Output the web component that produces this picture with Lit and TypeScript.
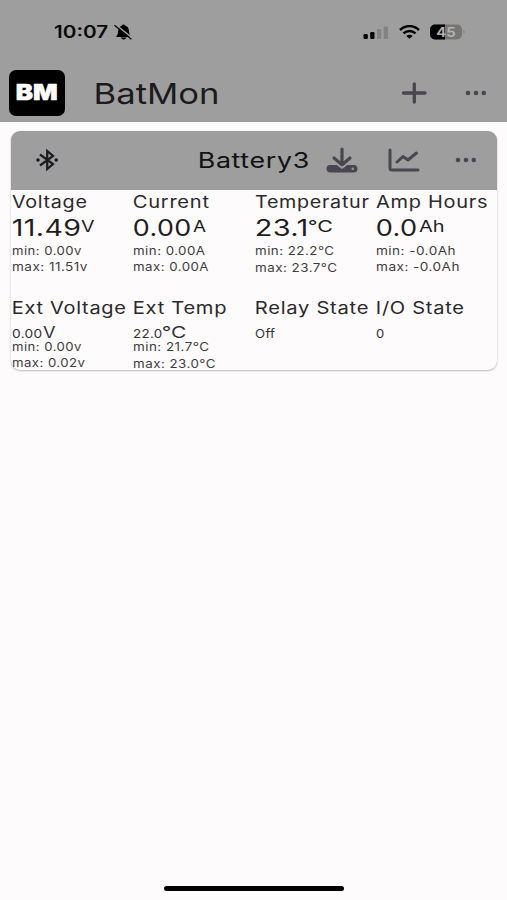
import { LitElement, html, css } from "lit";
import { customElement, property, state } from "lit/decorators.js";
import { styleMap } from "lit/directives/style-map.js";

const pen = document.createElement("canvas").getContext("2d") as any;

/** One run of wide-set text whose visible ink fills exactly `span` pixels. */
@customElement("wide-text")
export class WideText extends LitElement {
  @property() text = "";
  @property({ type: Number }) span = 50;
  @property({ type: Number }) size = 16;
  @property({ type: Number }) spacing = 0;
  @property() weight = "400";

  static styles = css`
    :host { display: inline-block; flex: none; height: 100%; }
    .run { display: inline-block; white-space: pre; transform-origin: 0 50%; }
  `;

  render() {
    pen.font = `${this.weight} ${this.size}px Inter`;
    pen.letterSpacing = `${this.spacing}px`;
    pen.textAlign = "left";
    const m = pen.measureText(this.text);
    const left = m.actualBoundingBoxLeft;
    const k = this.span / (m.actualBoundingBoxRight + left);
    this.style.width = `${this.span}px`;
    return html`<span class="run" style=${styleMap({
      fontSize: `${this.size}px`,
      fontWeight: this.weight,
      letterSpacing: `${this.spacing}px`,
      transform: `translateX(${left * k}px) scaleX(${k})`,
    })}>${this.text}</span>`;
  }
}

type Run = [text: string, span: number];
interface Reading {
  title: Run; value: Run; unit?: Run; gap?: number; small?: boolean;
  min?: Run; max?: Run; inset: number; low?: boolean;
}

@customElement("reading-cell")
export class ReadingCell extends LitElement {
  @property({ attribute: false }) data!: Reading;

  static styles = css`
    :host { display: block; min-width: 0; color: #2b292c; }
    .row { display: flex; padding-left: 0.6px; }
    .title { height: 22px; line-height: 22px; }
    .value { height: 27.5px; line-height: 29px; color: #1f1d20; padding-left: 1.5px; }
    .value .unit { line-height: 26px; }
    .value.small { height: 18px; line-height: 26px; color: #343236; padding-left: 0.5px; }
    .limit { height: 16px; line-height: 16px; color: #3f3d42; }
    .low { padding-top: 1px; }
  `;

  render() {
    const d = this.data;
    const valueSize = d.small ? 12.2 : 22.2;
    return html`
      <div class="row title" style=${styleMap({ paddingLeft: `${d.inset}px` })}>
        <wide-text .text=${d.title[0]} .span=${d.title[1]} .size=${17} .spacing=${0.6}></wide-text>
      </div>
      <div class="row value ${d.small ? "small" : ""}">
        <wide-text .text=${d.value[0]} .span=${d.value[1]} .size=${valueSize} .spacing=${0.3}></wide-text>
        ${d.unit ? html`<wide-text class="unit" style=${styleMap({ marginLeft: `${d.gap ?? 2}px` })}
          .text=${d.unit[0]} .span=${d.unit[1]} .size=${16}></wide-text>` : ""}
      </div>
      ${d.min ? html`<div class="row limit">
        <wide-text .text=${d.min[0]} .span=${d.min[1]} .size=${11.6} .spacing=${0.4}></wide-text>
      </div>` : ""}
      ${d.max ? html`<div class="row limit ${d.low ? "low" : ""}">
        <wide-text .text=${d.max[0]} .span=${d.max[1]} .size=${11.6} .spacing=${0.4}></wide-text>
      </div>` : ""}
    `;
  }
}

@customElement("app-root")
export class AppRoot extends LitElement {
  @state() private live: Reading[] = [
    { title: ["Voltage", 75], value: ["11.49", 67], unit: ["V", 13.5], gap: 1.5, min: ["min: 0.00v", 70], max: ["max: 11.51v", 76], inset: 0.7 },
    { title: ["Current", 75.5], value: ["0.00", 56], unit: ["A", 13], gap: 2.5, min: ["min: 0.00A", 72], max: ["max: 0.00A", 75.5], inset: 1 },
    { title: ["Temperatur", 114.5], value: ["23.1", 51], unit: ["°C", 23], gap: 2, min: ["min: 22.2°C", 78.5], max: ["max: 23.7°C", 81.5], inset: 1.3, low: true },
    { title: ["Amp Hours", 111.5], value: ["0.0", 39], unit: ["Ah", 25], gap: 2.5, min: ["min: -0.0Ah", 78.5], max: ["max: -0.0Ah", 82.5], inset: 0.5 },
  ];
  @state() private ext: Reading[] = [
    { title: ["Ext Voltage", 113], value: ["0.00", 29.5], unit: ["V", 12.5], gap: 1.5, small: true, min: ["min: 0.00v", 70], max: ["max: 0.02v", 73.5], inset: 1.5 },
    { title: ["Ext Temp", 92], value: ["22.0", 28.5], unit: ["°C", 22.5], gap: 1.7, small: true, min: ["min: 21.7°C", 75.5], max: ["max: 23.0°C", 82], inset: 1.1, low: true },
    { title: ["Relay State", 112.5], value: ["Off", 20.5], small: true, inset: 1.5 },
    { title: ["I/O State", 87], value: ["0", 7.5], small: true, inset: 1.5 },
  ];

  static styles = css`
    :host { display: flex; flex-direction: column; height: 900px; background: #fefbfd;
      font-family: Inter, sans-serif; color: #1c1a1d; overflow: hidden; }
    svg { display: block; flex: none; }
    .top { height: 122px; flex: none; background: #9e9e9e; box-sizing: border-box; }
    .status { height: 63px; display: flex; align-items: center; padding: 1px 41px 0 54px; box-sizing: border-box; }
    .status wide-text { height: 20px; line-height: 21px; color: #0a0a0a; }
    .bell { margin-left: 5px; }
    .grow { flex: 1; }
    .wifi { margin: 0 10px; }
    .bar { height: 59px; display: flex; align-items: center; padding: 0 20px 0 9px; box-sizing: border-box; }
    .logo { width: 56px; height: 46px; border-radius: 7px; background: #000; color: #fff;
      display: flex; justify-content: center; line-height: 44px; -webkit-text-stroke: 0.5px #fff; }
    .name { height: 36px; line-height: 36px; margin: 2px 0 0 30.5px; }
    .more { margin-left: 38px; }
    .card { margin: 9px 10px 0 11px; height: 238.5px; border-radius: 9px; overflow: hidden;
      box-shadow: 0 1px 2px rgba(0,0,0,.25), 0 0 1px rgba(0,0,0,.12); background: #fefbfd; flex: none; }
    .head { height: 58.5px; background: #9e9e9e; display: flex; align-items: center; padding: 0 20px 0 25px; }
    .head wide-text { height: 30px; line-height: 32px; color: #121212; }
    .save { margin-left: 18px; }
    .chart { margin-left: 30px; }
    .menu { margin-left: 35px; }
    .grid { display: grid; grid-template-columns: repeat(4, 121.5px); }
    .first { padding-top: 1.5px; height: 107.5px; box-sizing: border-box; }
    .home { width: 180px; height: 5px; border-radius: 3px; background: #000; margin: auto auto 9px 164px; }
  `;

  render() {
    return html`
      <div class="top">
        <div class="status">
          <wide-text text="10:07" .span=${54.5} .size=${17} weight="600"></wide-text>
          <svg class="bell" width="19" height="16" viewBox="0 0 19 16">
            <path d="M1.800 13C4.300 11 3.700 8.500 4.500 5.300C5.300 2.700 7 2 8 1.600C8.300 0 10.700 0 11 1.600C13.500 2.300 14.600 4 14.900 6.500C15.200 9.500 15.500 10.800 17 13ZM7 13.600H12.300C11.800 16.200 7.500 16.200 7 13.600Z"/>
            <path d="M2.200 1.200L18.500 14.200" stroke="#9e9e9e" stroke-width="1.500"/>
            <path d="M0.800 1.600L17 14.900" stroke="#0a0a0a" stroke-width="1.300" stroke-linecap="round"/>
          </svg>
          <span class="grow"></span>
          <svg width="26" height="15" viewBox="0 0 26 15">
            <rect x="0.500" y="9" width="4.300" height="5" rx="1.300"/>
            <rect x="7.200" y="7" width="4.300" height="7" rx="1.300"/>
            <rect x="14" y="4" width="4.300" height="10" rx="1.300" fill="#838383"/>
            <rect x="20.700" y="1.500" width="4.300" height="12.500" rx="1.300" fill="#838383"/>
          </svg>
          <svg class="wifi" width="21" height="14" viewBox="0 0 21 14" fill="none" stroke="#050505" stroke-width="2.500">
            <path d="M1 5C6.500-.2 14.500-.2 20 5"/>
            <path d="M4.500 8.400C8 5.200 13 5.200 16.500 8.400"/>
            <path d="M7.300 10.900C9.200 9.200 11.800 9.200 13.700 10.900L10.500 13.800Z" fill="#050505" stroke="none"/>
          </svg>
          <svg width="36" height="16" viewBox="0 0 36 16">
            <defs><clipPath id="c"><rect x="0" y="0.500" width="32" height="15" rx="5"/></clipPath></defs>
            <g clip-path="url(#c)"><rect width="32" height="16" fill="#767676"/><rect width="15" height="16"/></g>
            <path d="M33.500 6Q36 8 33.500 10Z" fill="#7c7c7c"/>
            <text x="6.200" y="12.500" font-family="Inter" font-size="12.500" font-weight="700" fill="#b2b2b2" textLength="19.500" lengthAdjust="spacingAndGlyphs">45</text>
          </svg>
        </div>
        <div class="bar">
          <div class="logo"><wide-text text="BM" .span=${40} .size=${21.5} weight="900"></wide-text></div>
          <wide-text class="name" text="BatMon" .span=${121} .size=${29}></wide-text>
          <span class="grow"></span>
          <svg width="26" height="22" viewBox="0 0 26 22" stroke="#49464f" stroke-width="3.300" stroke-linecap="round">
            <path d="M2.500 11H24M13.300 2V20"/>
          </svg>
          <svg class="more" width="22" height="6" viewBox="0 0 22 6" fill="#49464f">
            <circle cx="3" cy="3" r="2.300"/><circle cx="11" cy="3" r="2.300"/><circle cx="18.800" cy="3" r="2.300"/>
          </svg>
        </div>
      </div>
      <div class="card">
        <div class="head">
          <svg width="22" height="22" viewBox="0 0 22 22" fill="none" stroke="#1c1b1e" stroke-width="2.200">
            <path d="M4 5.500L17 15L11.200 20V2L17 7L4 16.500"/>
            <circle cx="2" cy="11" r="1.800" fill="#1c1b1e" stroke="none"/><circle cx="20.200" cy="11" r="1.800" fill="#1c1b1e" stroke="none"/>
          </svg>
          <span class="grow"></span>
          <wide-text text="Battery3" .span=${109} .size=${21} .spacing=${0.5}></wide-text>
          <svg class="save" width="32" height="26" viewBox="0 0 32 26">
            <rect x="0.500" y="18" width="31" height="7.500" rx="3.700" fill="#49464f"/>
            <path d="M8 12.500L16 18.500L24 12.500" fill="none" stroke="#9e9e9e" stroke-width="5.500"/>
            <path d="M16 2V17M8 11L16 17.700L24 11" fill="none" stroke="#49464f" stroke-width="3.200" stroke-linecap="round" stroke-linejoin="round"/>
            <circle cx="26.700" cy="21.700" r="1.200" fill="#9e9e9e"/>
          </svg>
          <svg class="chart" width="32" height="24" viewBox="0 0 32 24" fill="none" stroke="#49464f" stroke-width="3" stroke-linecap="round" stroke-linejoin="round">
            <path d="M2 2V20Q2 22 4 22H30M9 14L15 8.500L20 12L28.500 5"/>
          </svg>
          <svg class="menu" width="22" height="6" viewBox="0 0 22 6" fill="#49464f">
            <circle cx="3" cy="3" r="2.300"/><circle cx="11" cy="3" r="2.300"/><circle cx="18.800" cy="3" r="2.300"/>
          </svg>
        </div>
        <div class="grid first">${this.live.map((d) => html`<reading-cell .data=${d}></reading-cell>`)}</div>
        <div class="grid">${this.ext.map((d) => html`<reading-cell .data=${d}></reading-cell>`)}</div>
      </div>
      <div class="home"></div>
    `;
  }
}
